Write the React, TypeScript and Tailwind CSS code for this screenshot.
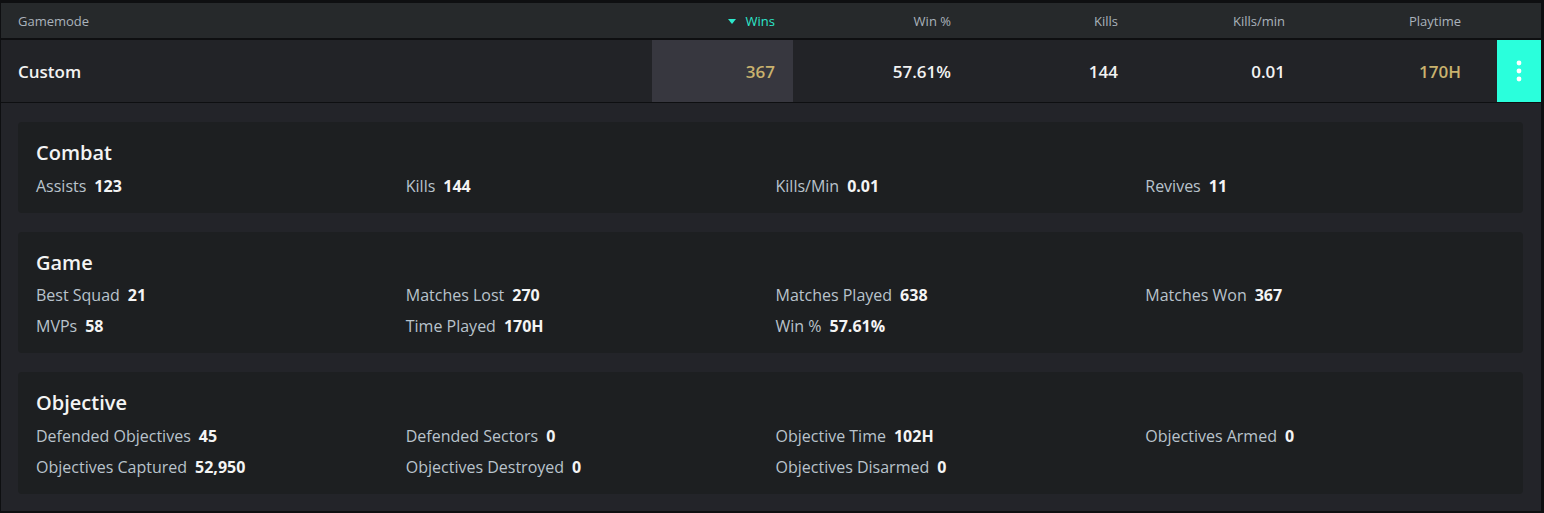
import { Fragment } from 'react';

interface StatSection {
  title: string;
  stats: [string, string][];
}

const sections: StatSection[] = [
  {
    title: 'Combat',
    stats: [
      ['Assists', '123'],
      ['Kills', '144'],
      ['Kills/Min', '0.01'],
      ['Revives', '11'],
    ],
  },
  {
    title: 'Game',
    stats: [
      ['Best Squad', '21'],
      ['Matches Lost', '270'],
      ['Matches Played', '638'],
      ['Matches Won', '367'],
      ['MVPs', '58'],
      ['Time Played', '170H'],
      ['Win %', '57.61%'],
    ],
  },
  {
    title: 'Objective',
    stats: [
      ['Defended Objectives', '45'],
      ['Defended Sectors', '0'],
      ['Objective Time', '102H'],
      ['Objectives Armed', '0'],
      ['Objectives Captured', '52,950'],
      ['Objectives Destroyed', '0'],
      ['Objectives Disarmed', '0'],
    ],
  },
];

const font = { fontFamily: '"Open Sans", "Noto Sans", sans-serif' };

function SortCaret() {
  return (
    <svg width="8" height="5" viewBox="0 0 8 5" className="mr-[10px]">
      <path d="M0 0 L8 0 L4 5 Z" fill="#2de8cc" />
    </svg>
  );
}

function DotsIcon() {
  return (
    <svg width="6" height="22" viewBox="0 0 6 22">
      <circle cx="3" cy="3" r="2.4" fill="#ffffff" />
      <circle cx="3" cy="11" r="2.4" fill="#ffffff" />
      <circle cx="3" cy="19" r="2.4" fill="#ffffff" />
    </svg>
  );
}

export default function App() {
  return (
    <div
      className="w-[1544px] h-[513px] bg-[#0e0f11] pt-[3px] pl-[1px] pr-[3px] pb-[2px] flex flex-col"
      style={font}
    >
      {/* Header */}
      <div className="h-[35px] pt-[2px] bg-[#26292b] flex items-center text-[13px] text-[#aab3bc]">
        <div className="flex-1 pl-[17px]">Gamemode</div>
        <div className="w-[141px] pr-[18px] flex items-center justify-end text-[#2de8cc]">
          <SortCaret />
          Wins
        </div>
        <div className="w-[176px] pr-[18px] text-right">Win %</div>
        <div className="w-[167px] pr-[18px] text-right">Kills</div>
        <div className="w-[167px] pr-[18px] text-right">Kills/min</div>
        <div className="w-[176px] pr-[18px] text-right">Playtime</div>
        <div className="w-[62px]" />
      </div>

      {/* Row */}
      <div className="mt-[2px] h-[62px] bg-[#222327] flex items-stretch text-[17px] font-semibold text-[#f2f2f2]">
        <div className="flex-1 pl-[17px] pt-[2px] flex items-center">Custom</div>
        <div className="w-[141px] pr-[18px] pt-[2px] flex items-center justify-end bg-[#37373f] text-[#c9b26e]">367</div>
        <div className="w-[176px] pr-[18px] pt-[2px] flex items-center justify-end">57.61%</div>
        <div className="w-[167px] pr-[18px] pt-[2px] flex items-center justify-end">144</div>
        <div className="w-[167px] pr-[18px] pt-[2px] flex items-center justify-end">0.01</div>
        <div className="w-[176px] pr-[18px] pt-[2px] flex items-center justify-end text-[#c9b26e]">170H</div>
        <div className="w-[18px]" />
        <button className="w-[44px] bg-[#2affdc] flex items-center justify-center">
          <DotsIcon />
        </button>
      </div>

      {/* Details */}
      <div className="mt-[1px] flex-1 bg-[#232429] pt-[19px] pl-[17px] pr-[18px] flex flex-col gap-[19px]">
        {sections.map((section) => (
          <div key={section.title} className="bg-[#1d1f21] rounded-[4px] pt-[17px] pb-[11.5px] px-[18px]">
            <h3 className="text-[20px] leading-[28px] font-semibold text-[#f4f4f4] mb-[3px]">{section.title}</h3>
            <div className="grid grid-cols-4 gap-x-[10px]">
              {section.stats.map(([label, value]) => (
                <Fragment key={label}>
                  <div className="h-[31px] flex items-center text-[16px]">
                    <span className="font-medium text-[#b9c3cc]">{label}</span>
                    <span className="ml-[8px] font-bold text-[#f4f4f4]">{value}</span>
                  </div>
                </Fragment>
              ))}
            </div>
          </div>
        ))}
      </div>
    </div>
  );
}
